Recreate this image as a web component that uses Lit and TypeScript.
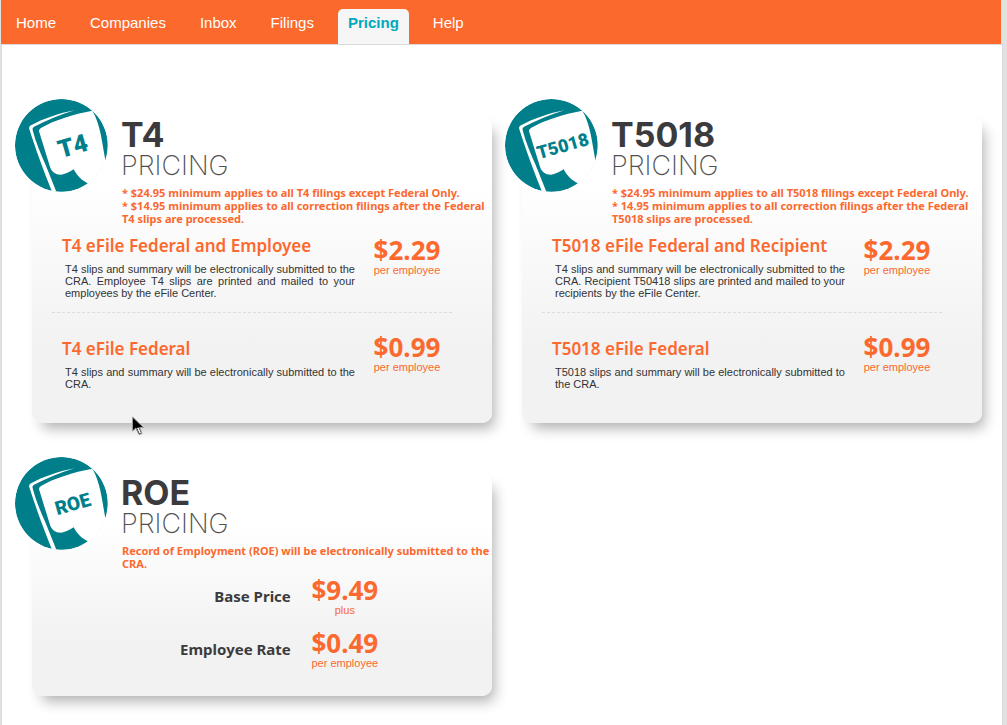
import { LitElement, html, css, svg } from "lit";
import { customElement, property } from "lit/decorators.js";

interface Plan {
  title: string;
  text: string;
  price: string;
  unit: string;
}

interface Product {
  name: string;
  badgeSize: number;
  notes: string[];
  plans?: Plan[];
  rates?: { label: string; price: string; unit: string }[];
}

const NAV = ["Home", "Companies", "Inbox", "Filings", "Pricing", "Help"];

const PRODUCTS: Product[] = [
  {
    name: "T4",
    badgeSize: 74,
    notes: [
      "* $24.95 minimum applies to all T4 filings except Federal Only.",
      "* $14.95 minimum applies to all correction filings after the Federal T4 slips are processed.",
    ],
    plans: [
      {
        title: "T4 eFile Federal and Employee",
        text: "T4 slips and summary will be electronically submitted to the CRA. Employee T4 slips are printed and mailed to your employees by the eFile Center.",
        price: "$2.29",
        unit: "per employee",
      },
      {
        title: "T4 eFile Federal",
        text: "T4 slips and summary will be electronically submitted to the CRA.",
        price: "$0.99",
        unit: "per employee",
      },
    ],
  },
  {
    name: "T5018",
    badgeSize: 54,
    notes: [
      "* $24.95 minimum applies to all T5018 filings except Federal Only.",
      "* 14.95 minimum applies to all correction filings after the Federal T5018 slips are processed.",
    ],
    plans: [
      {
        title: "T5018 eFile Federal and Recipient",
        text: "T4 slips and summary will be electronically submitted to the CRA. Recipient T50418 slips are printed and mailed to your recipients by the eFile Center.",
        price: "$2.29",
        unit: "per employee",
      },
      {
        title: "T5018 eFile Federal",
        text: "T5018 slips and summary will be electronically submitted to the CRA.",
        price: "$0.99",
        unit: "per employee",
      },
    ],
  },
  {
    name: "ROE",
    badgeSize: 57,
    notes: ["Record of Employment (ROE) will be electronically submitted to the CRA."],
    rates: [
      { label: "Base Price", price: "$9.49", unit: "plus" },
      { label: "Employee Rate", price: "$0.49", unit: "per employee" },
    ],
  },
];

@customElement("price-card")
export class PriceCard extends LitElement {
  @property({ attribute: false }) product!: Product;

  static styles = css`
    :host {
      display: block;
      min-width: 0;
    }
    .card {
      box-sizing: border-box;
      height: 100%;
      padding-bottom: 27px;
      border-radius: 10px;
      background: linear-gradient(#fff 22%, #f2f2f2 75%);
      box-shadow: 6px 9px 14px -4px rgba(0, 0, 0, 0.32);
    }
    .head {
      display: flex;
      align-items: flex-start;
      height: 70px;
    }
    .logo {
      flex: none;
      width: 93px;
      height: 93px;
      margin: -17px 13px 0 -17px;
      border-radius: 50%;
    }
    .badge {
      font-family: Roboto, "Liberation Sans", sans-serif;
      font-weight: 900;
      text-anchor: middle;
      fill: #007f8b;
    }
    .title {
      margin: 3px 0 0;
      font-family: Inter, "Liberation Sans", sans-serif;
      color: #3b3b3d;
    }
    .name {
      display: block;
      font-size: 34px;
      line-height: 32px;
      font-weight: 700;
    }
    .kind {
      display: block;
      font-size: 27px;
      line-height: 30px;
      font-weight: 200;
      color: #505052;
    }
    .notes {
      margin: 0 0 0 90px;
      font: bold 11px/13px "Noto Sans", "Open Sans", sans-serif;
      color: #fb692e;
    }
    .note {
      margin: 0;
    }
    .plans {
      margin: 11px 40px 0 20px;
    }
    .plan {
      display: flex;
      align-items: center;
      gap: 18px;
      padding: 0 11px 0 10px;
    }
    .plan + .plan {
      margin-top: 13px;
      padding-top: 20px;
      border-top: 1px dashed #dcdcdc;
    }
    .info {
      flex: 1;
      min-width: 0;
    }
    .plan-title {
      margin: 0;
      font: 600 17px/20px "Noto Sans", "Open Sans", sans-serif;
      color: #fb692e;
      white-space: nowrap;
    }
    .text {
      margin: 7px 0 0 3px;
      font-size: 11px;
      line-height: 12px;
      text-align: justify;
      color: #333;
    }
    .price {
      flex: none;
      width: 68px;
      text-align: center;
      color: #fb692e;
    }
    .plan .price {
      padding-bottom: 23px;
    }
    .amount {
      display: flex;
      justify-content: center;
      font: bold 26px/28px "Noto Sans", "Open Sans", sans-serif;
    }
    .unit {
      display: block;
      font-size: 11px;
      line-height: 12px;
    }
    .rates {
      display: grid;
      grid-template-columns: 10fr 7fr;
      gap: 13px 20px;
      align-items: center;
      margin: 6px 0 0;
    }
    .label {
      text-align: right;
      font: bold 15px/20px "Noto Sans", "Open Sans", sans-serif;
      color: #3b3b3d;
    }
    .rate {
      margin: 0;
    }
  `;

  private logo() {
    return html`<svg class="logo" viewBox="45 26 279 279" aria-hidden="true">
      ${svg`
        <circle cx="184" cy="165" r="139" fill="#007f8b"/>
        <path fill="#fff" d="M118 126Q114 118 124 112C160 91 220 71 277 61C288 78 300 112 307 158L316 210L345 212L320 310L270 290L262 278C248 272 230 256 221 237C205 247 194 252 184 253C164 253 153 243 148 223Z"/>
        <path fill="#fff" d="M156 304C134 250 108 180 88 117Q85 109 93 105C128 86 178 68 224 60C184 72 140 90 102 109Q96 112 98 120C108 158 122 190 136 222L169 304Z"/>
        <text class="badge" font-size=${this.product.badgeSize} transform="translate(218 166) rotate(-16)" y=${this.product.badgeSize * 0.36}>${this.product.name}</text>
      `}
    </svg>`;
  }

  private price(amount: string, unit: string) {
    return html`<div class="price"><strong class="amount">${amount}</strong><span class="unit">${unit}</span></div>`;
  }

  render() {
    const p = this.product;
    return html`<article class="card">
      <header class="head">
        ${this.logo()}
        <h2 class="title"><span class="name">${p.name}</span><span class="kind">PRICING</span></h2>
      </header>
      <div class="notes">${p.notes.map((n) => html`<p class="note">${n}</p>`)}</div>
      ${p.plans
        ? html`<div class="plans">
            ${p.plans.map(
              (plan) => html`<section class="plan">
                <div class="info">
                  <h3 class="plan-title">${plan.title}</h3>
                  <p class="text">${plan.text}</p>
                </div>
                ${this.price(plan.price, plan.unit)}
              </section>`
            )}
          </div>`
        : ""}
      ${p.rates
        ? html`<dl class="rates">
            ${p.rates.map(
              (r) => html`<dt class="label">${r.label}</dt>
                <dd class="rate">${this.price(r.price, r.unit)}</dd>`
            )}
          </dl>`
        : ""}
    </article>`;
  }
}

@customElement("app-root")
export class AppRoot extends LitElement {
  static styles = css`
    :host {
      display: flex;
      flex-direction: column;
      position: relative;
      box-sizing: border-box;
      min-height: 100vh;
      padding: 0 4px 0 1px;
      background: #e1e1e1;
      font-family: Arial, "Liberation Sans", sans-serif;
    }
    .nav {
      display: flex;
      align-items: flex-end;
      gap: 14px;
      height: 44px;
      margin-right: 2px;
      padding-left: 5px;
      background: #fc692d;
    }
    .link {
      padding: 0 10px 7px;
      border-radius: 5px 5px 0 0;
      font-size: 15px;
      line-height: 28px;
      color: #fff;
      text-decoration: none;
    }
    .link[aria-current] {
      background: #f6f6f6;
      color: #00a9bd;
      font-weight: bold;
    }
    .main {
      flex: 1;
      display: grid;
      grid-template-columns: repeat(2, minmax(0, 1fr));
      align-content: start;
      gap: 51px 30px;
      padding: 71px 20px 29px 30px;
      border: 1px solid #dadada;
      border-bottom: 0;
      background: #fff;
    }
    .cursor {
      position: absolute;
      left: 131px;
      top: 416px;
      width: 14px;
      height: 20px;
    }
  `;

  render() {
    return html`
      <nav class="nav">
        ${NAV.map((n) =>
          n === "Pricing"
            ? html`<a class="link" href="#" aria-current="page">${n}</a>`
            : html`<a class="link" href="#">${n}</a>`
        )}
      </nav>
      <main class="main">
        ${PRODUCTS.map((p) => html`<price-card .product=${p}></price-card>`)}
      </main>
      <svg class="cursor" viewBox="0 0 14 20" aria-hidden="true">
        <path d="M1.500 1V15L4.800 12L8 18.500L11 17.500L8.500 11.500H12.500Z" fill="#000" stroke="#999" stroke-width="1"/>
        <path d="M6 12L8.500 17.500L10 17L7.500 11.500Z" fill="#fff"/>
      </svg>
    `;
  }
}
